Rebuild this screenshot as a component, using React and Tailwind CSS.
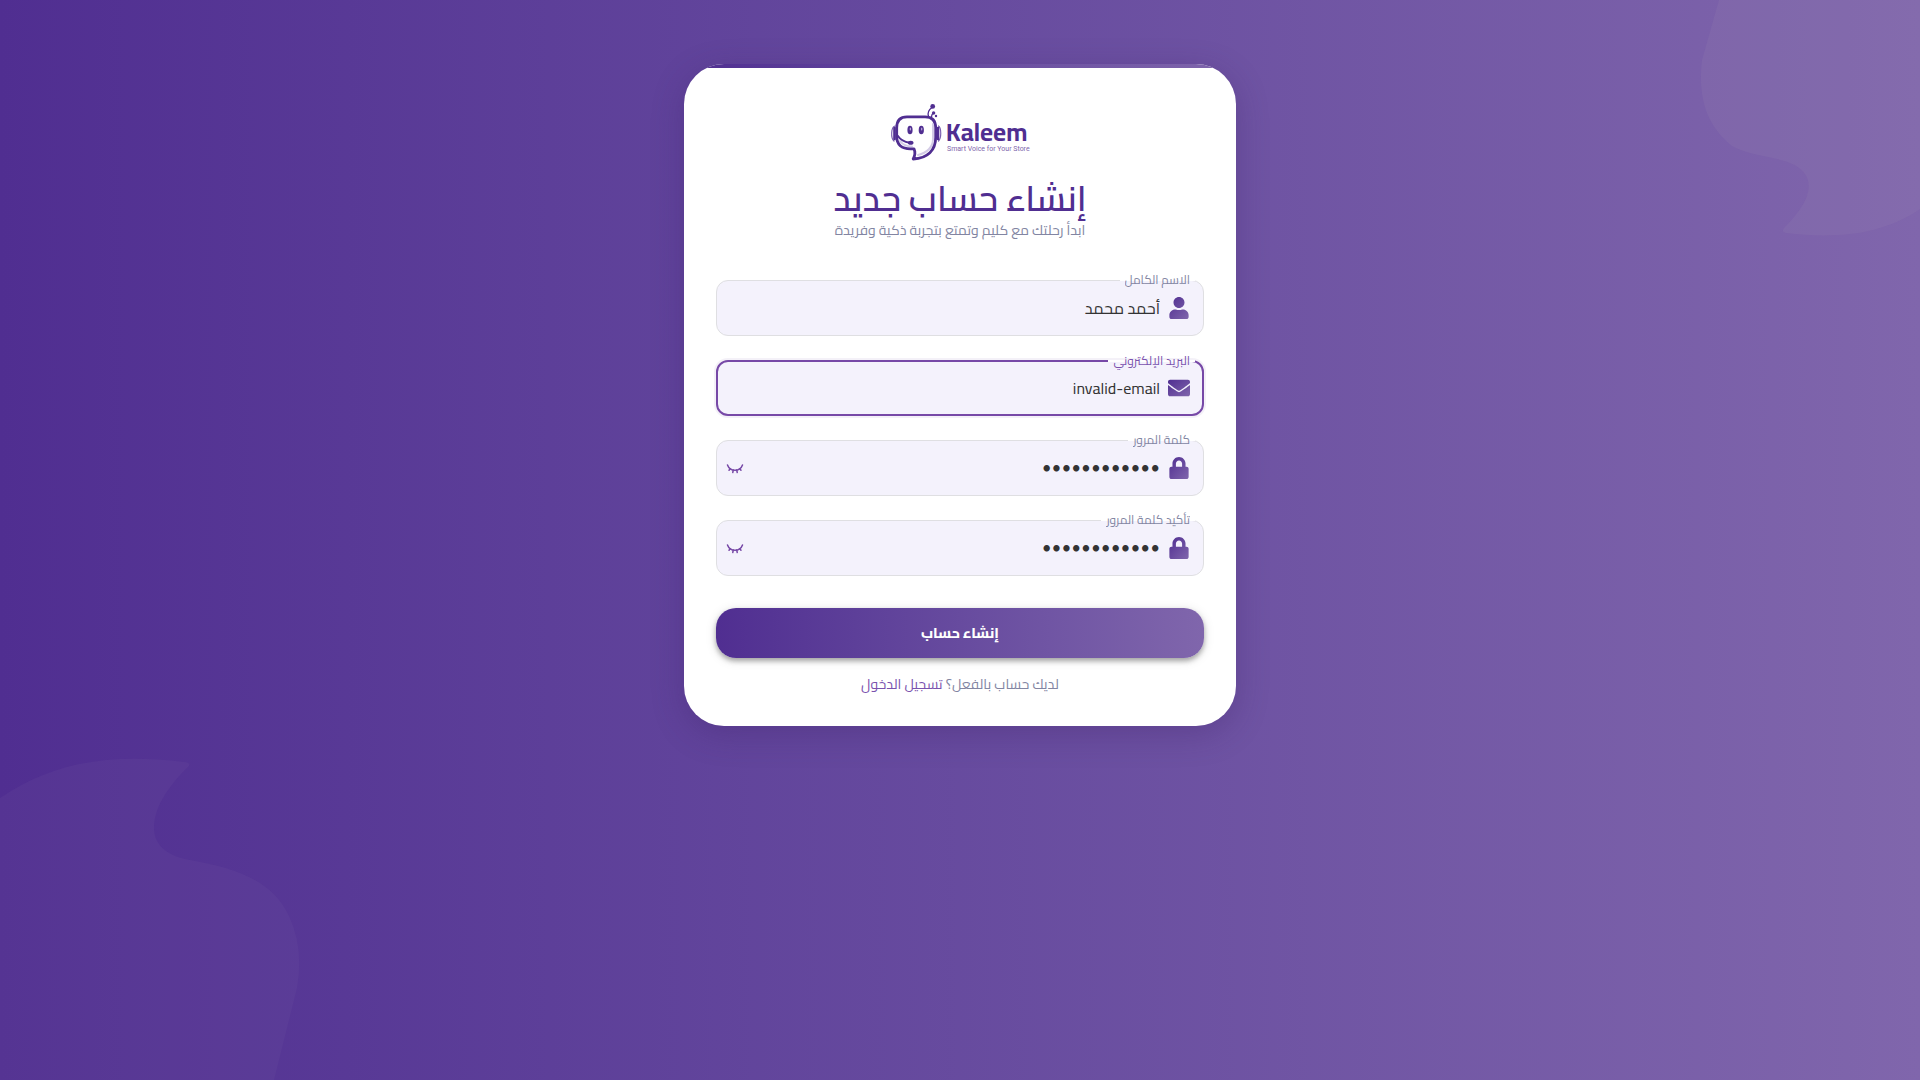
import { useState } from "react";
import { FaUser, FaEnvelope, FaLock } from "react-icons/fa";
import { EyeClosed } from "lucide-react";

const icons = { user: FaUser, mail: FaEnvelope, lock: FaLock };

function Logo() {
  return (
    <svg viewBox="0 0 140 58" className="h-[58px] w-[140px] overflow-visible" role="img" aria-label="Kaleem" direction="ltr">
      <g fill="none" stroke="#502e91" strokeLinecap="round" strokeLinejoin="round">
        <path d="M5 22C1 23 .5 34 4 37M48.500 22c3 2 3 12 0 15" strokeWidth="1.200" stroke="#7a5fae" />
        <path d="M4.500 24v11M48 24v11" strokeWidth="2.600" />
        <path d="M43 20v15c0 8-6 14-15 16M10 37c3 4 6 5.500 12 5.500" stroke="#d3cbe6" strokeWidth="2" />
        <path d="M17 12.800h18c7.500 0 10.700 4 10.700 11v9.500c0 13-8 21-22.500 21.700 1.500-3 2.800-6 .800-10.200h-3.500c-9 0-13.800-4-13.800-12.500v-8.500c0-7 3.300-11 10.300-11Z" strokeWidth="2.800" />
        <path d="M7.500 31.500c3 4.500 7 6.500 12 7.200" strokeWidth="2" />
        <path d="M38.500 12.500c-1.200-4 .5-7 3.500-9M41.500 13c0-2 .5-3 1.800-4" strokeWidth="1.300" />
      </g>
      <g fill="#502e91">
        <ellipse cx="20" cy="26" rx="2.600" ry="4.300" />
        <ellipse cx="31.300" cy="26" rx="2.600" ry="4.300" />
        <ellipse cx="20.700" cy="38.700" rx="2.800" ry="2" />
        <circle cx="42.700" cy="2.400" r="2.400" />
        <circle cx="43.600" cy="9" r="1.700" />
        <circle cx="46" cy="12" r="1.200" />
      </g>
      <ellipse cx="20.400" cy="25" rx=".7" ry="1.600" fill="#b9abd8" />
      <ellipse cx="31.700" cy="25" rx=".7" ry="1.600" fill="#b9abd8" />
      <text x="56" y="37" fill="#502e91" className="font-['Cairo','Noto_Sans',sans-serif] text-[25px] font-bold">Kaleem</text>
      <text x="57" y="47" fill="#8066ac" className="font-['Roboto',sans-serif] text-[7px]">Smart Voice for Your Store</text>
    </svg>
  );
}

function Field({ id, label, icon, type, initial, focused, toggle }) {
  const [value, setValue] = useState(initial);
  const Icon = icons[icon];
  return (
    <div
      className={`relative flex h-14 items-center rounded-xl bg-[#f4f2fc] ${focused ? "border-2 border-[#7749a7] px-3 shadow-[0_0_0_2px_rgba(119,73,167,0.08)]" : "border border-[#dfdfe2] pr-[13px] pl-[9px]"}`}
    >
      <label
        htmlFor={id}
        className={`absolute flex items-center bg-white px-[5px] text-xs ${focused ? "-top-0.5 right-[7px] h-0.5 text-[#7a52ae]" : "-top-px right-2 h-px text-[#8285a2]"}`}
      >
        <span className="h-[17px] overflow-hidden leading-[15px]">{label}</span>
      </label>
      <Icon size={22} fill="url(#icon-gradient)" className="shrink-0" />
      <input
        id={id}
        type={type}
        value={value}
        onChange={(e) => setValue(e.target.value)}
        className={`min-w-0 flex-1 bg-transparent px-2 text-right text-[#333333] outline-none ${type === "password" ? "font-['Lato',sans-serif] text-[17px]" : "text-base"}`}
      />
      {toggle && (
        <button type="button" aria-label="إظهار كلمة المرور" className="text-[#7749a7]">
          <EyeClosed size={18} />
        </button>
      )}
    </div>
  );
}

export default function App() {
  return (
    <main
      dir="rtl"
      className="relative flex min-h-screen justify-center overflow-hidden bg-linear-to-r from-[#502e91] to-[#8066ac] py-16 font-['Cairo','Noto_Sans','DejaVu_Sans',sans-serif]"
    >
      <svg width="0" height="0" className="absolute" aria-hidden="true">
        <linearGradient id="icon-gradient" x1="0" y1="0" x2="1" y2="1">
          <stop offset="0" stopColor="#502e91" />
          <stop offset="1" stopColor="#8066ac" />
        </linearGradient>
      </svg>
      <svg viewBox="0 0 220 240" className="absolute top-0 right-0 h-60 w-[220px]" fill="#a498b8" fillOpacity="0.12" aria-hidden="true">
        <path d="M19 0 2 60C-3 103 10 128 32 146C45 153 60 155 77 159C101 164 112 176 108 192Q105 207 84 228Q81 232 86 233C135 239 182 235 220 209V0Z" />
      </svg>
      <svg viewBox="0 0 300 322" className="absolute bottom-0 left-0 h-[322px] w-[300px]" fill="#a498b8" fillOpacity="0.06" aria-hidden="true">
        <path d="M0 40C48 7 105-6 184 4Q192 5 188 9C177 19 162 38 157 53C147 83 163 97 190 102C235 110 272 122 289 158Q304 190 297 230L274 322H0Z" />
      </svg>

      <section className="relative h-fit w-full max-w-[552px] overflow-hidden rounded-[40px] bg-white px-8 pt-10 pb-8 shadow-[0_8px_32px_rgba(60,30,100,0.3)]">
        <div className="absolute inset-x-0 top-0 h-1 bg-linear-to-r from-[#502e91] to-[#8066ac]" />
        <header className="flex flex-col items-center">
          <Logo />
          <h1 className="mt-4 text-[35px] leading-10 font-semibold whitespace-nowrap text-[#502e91]">إنشاء حساب جديد</h1>
          <p className="text-sm leading-6 text-[#8285a2]">ابدأ رحلتك مع كليم وتمتع بتجربة ذكية وفريدة</p>
        </header>
        <form className="mt-[38px] flex flex-col gap-6" onSubmit={(e) => e.preventDefault()}>
          <Field id="name" label="الاسم الكامل" icon="user" type="text" initial="أحمد محمد" />
          <Field id="email" label="البريد الإلكتروني" icon="mail" type="text" initial="invalid-email" focused />
          <Field id="password" label="كلمة المرور" icon="lock" type="password" initial="password1234" toggle />
          <Field id="confirm" label="تأكيد كلمة المرور" icon="lock" type="password" initial="password1234" toggle />
          <button
            type="submit"
            className="mt-2 h-[50px] rounded-[20px] bg-linear-to-r from-[#502e91] to-[#8066ac] text-sm font-extrabold text-white shadow-[0_3px_5px_rgba(0,0,0,0.3),0_2px_12px_rgba(0,0,0,0.12)]"
          >
            إنشاء حساب
          </button>
        </form>
        <p className="mt-4 text-center text-sm leading-5 text-[#8285a2]">
          لديك حساب بالفعل؟ <a href="#login" className="text-[#7a52ae]">تسجيل الدخول</a>
        </p>
      </section>
    </main>
  );
}
